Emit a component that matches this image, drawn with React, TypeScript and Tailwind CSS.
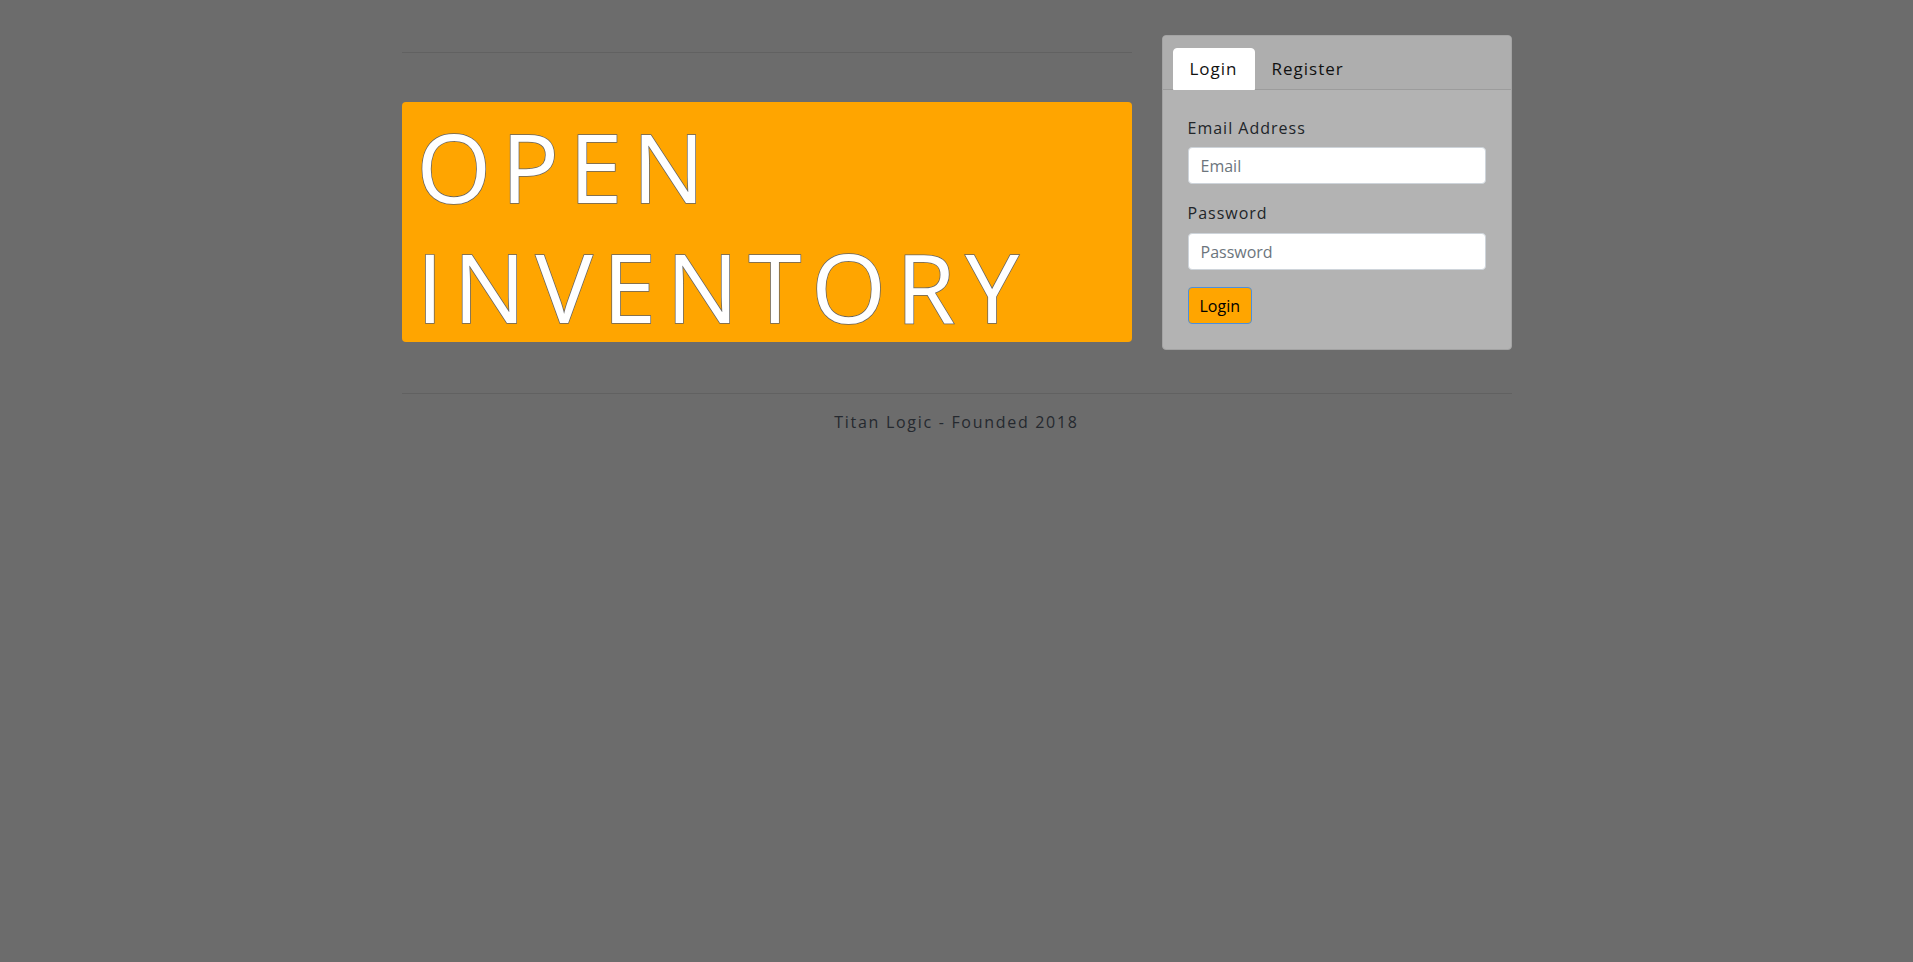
import React from "react";

export default function App() {
  return (
    <div className="min-h-[962px] bg-[#6c6c6c] font-['Open_Sans',sans-serif] tracking-[1px] text-[#212529] text-[16px] leading-[24px]">
      <div className="mx-auto w-[1140px] px-[15px]">
        <div className="flex pt-[35px]">
          <div className="w-[730px]">
            <hr className="mt-[17px] border-0 border-t border-t-black/10" />
            <h1 className="mt-[49px] box-border h-[240px] rounded-[4px] bg-[#ffa500] pl-[15px] pt-[4px] font-['Open_Sans',sans-serif] text-[96px] font-normal leading-[120px] tracking-[10px] text-white [-webkit-text-stroke:1.5px_#636363] [paint-order:stroke_fill]">
              OPEN INVENTORY
            </h1>
          </div>
          <div className="ml-[30px] w-[350px]">
            <div className="overflow-hidden rounded-[4px] border border-[#a3a3a3] bg-[#b3b3b3]">
              <div className="border-b border-[#9c9c9c] bg-[#aeaeae] px-[10px] pt-[12px]">
                <div className="flex">
                  <div className="-mb-px rounded-t-[4px] border border-white bg-white px-[16px] pb-[7px] pt-[8px] text-[17px] text-[#111]">
                    Login
                  </div>
                  <div className="border border-transparent px-[16px] pb-[7px] pt-[8px] text-[17px] text-[#111]">
                    Register
                  </div>
                </div>
              </div>
              <div className="px-[25px] pb-[25px] pt-[26px]">
                <label className="block text-[16px] leading-[24px]">Email Address</label>
                <input
                  className="mt-[7px] block h-[37px] w-full rounded-[4px] border border-[#ced4da] bg-white px-[12px] text-[16px] tracking-normal text-[#495057] placeholder:text-[#6c757d] outline-none"
                  placeholder="Email"
                />
                <label className="mt-[17px] block text-[16px] leading-[24px]">Password</label>
                <input
                  type="password"
                  className="mt-[8px] block h-[37px] w-full rounded-[4px] border border-[#ced4da] bg-white px-[12px] text-[16px] tracking-normal text-[#495057] placeholder:text-[#6c757d] outline-none"
                  placeholder="Password"
                />
                <button className="mt-[17px] block h-[37px] rounded-[4px] border border-[#4a8fe0] bg-[#ffa500] px-[11px] text-[16px] tracking-normal text-black">
                  Login
                </button>
              </div>
            </div>
          </div>
        </div>
        <hr className="mt-[43px] border-0 border-t border-t-black/10" />
        <p className="mt-[16px] text-center tracking-[1.7px] text-[#25292f]">Titan Logic - Founded 2018</p>
      </div>
    </div>
  );
}
